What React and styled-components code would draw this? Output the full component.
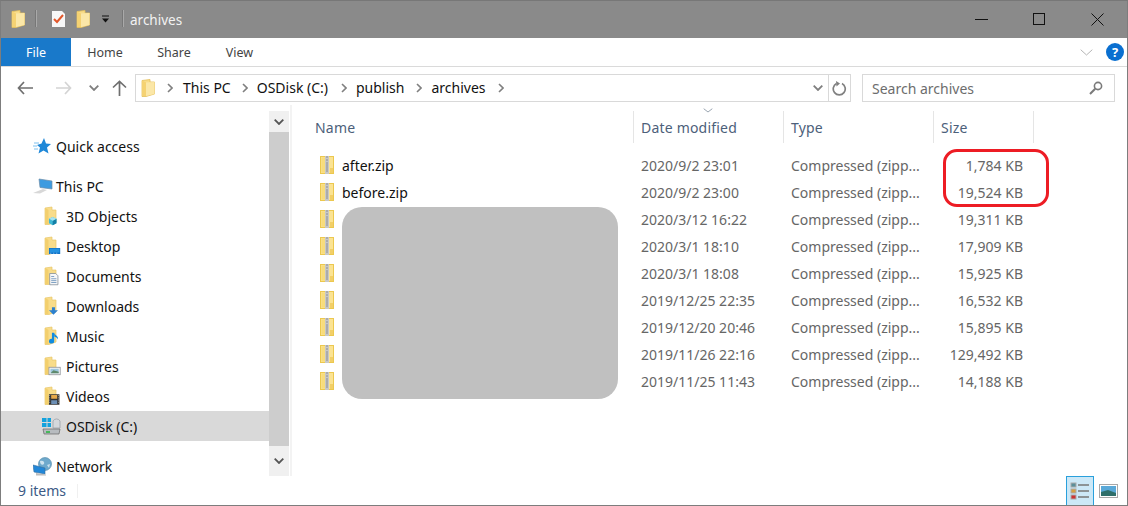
import React from "react";
import styled, { createGlobalStyle } from "styled-components";

const Global = createGlobalStyle`
  html, body { margin: 0; padding: 0; background: #fff; }
  body { font-family: "Noto Sans", "Open Sans", sans-serif; font-size: 14px; color: #111; }
  * { box-sizing: border-box; }
`;

const Window = styled.div`
  position: relative; width: 1128px; height: 506px; display: flex; flex-direction: column;
  border: 1px solid #7d7d7d; border-top-color: #777; overflow: hidden; background: #fff;
`;
const TitleBar = styled.div`
  height: 37px; flex: none; background: #8a8a8a; display: flex; align-items: center; padding: 0 0 2px 10px;
`;
const QuickSlot = styled.span`
  display: flex; align-items: center; justify-content: center; margin-right: ${p => p.$mr || 0}px;
`;
const TitleSep = styled.span`
  width: 2px; height: 17px; background: #a9a9a9; border-left: 1px solid #777; margin-right: ${p => p.$mr}px;
`;
const TitleText = styled.span`
  font-size: 13.5px; color: #f2f2f2; line-height: 20px; margin-top: 2px;
`;
const WinControls = styled.div`
  margin-left: auto; display: flex; align-items: center; margin-right: 23px; gap: 45px; margin-top: 2px;
`;
const Ribbon = styled.div`
  height: 29px; flex: none; display: flex; align-items: stretch; border-bottom: 1px solid #dadada;
`;
const FileTab = styled.div`
  width: 70px; background: #1979ca; color: #fff; font-size: 12.5px; display: flex; align-items: center; justify-content: center;
`;
const Tab = styled.div`
  width: ${p => p.$w}px; font-size: 12.5px; color: #444; display: flex; align-items: center; justify-content: center;
`;
const RibbonEnd = styled.div`
  margin-left: auto; display: flex; align-items: center; gap: 13px; margin-right: 3px;
`;
const NavRow = styled.div`
  height: 38px; flex: none; padding-top: 7px; display: flex; align-items: flex-start;
`;
const NavButtons = styled.div`
  width: 134px; height: 28px; flex: none; display: flex; align-items: center; padding-left: 16px;
`;
const NavSlot = styled.span`
  display: flex; margin-right: ${p => p.$mr}px;
`;
const AddressBox = styled.div`
  width: 716px; height: 28px; flex: none; border: 1px solid #d9d9d9; display: flex; align-items: center; padding-left: 5px;
`;
const Crumb = styled.span`
  font-size: 14px; color: #111; margin-left: ${p => p.$ml}px; line-height: 20px;
`;
const CrumbArrow = styled.span`
  display: flex; margin-left: ${p => p.$ml}px;
`;
const AddressEnd = styled.div`
  margin-left: auto; display: flex; align-items: center; height: 100%;
`;
const RefreshCell = styled.div`
  width: 22px; height: 100%; border-left: 1px solid #d9d9d9; display: flex; align-items: center; justify-content: center; margin-left: 5px;
`;
const SearchBox = styled.div`
  width: 253px; height: 28px; flex: none; margin-left: 11px; border: 1px solid #d9d9d9; display: flex; align-items: center; justify-content: space-between; padding: 0 11px 0 9px;
  font-size: 14px; color: #6d6d6d;
`;
const Main = styled.div`
  flex: 1; min-height: 0; display: flex;
`;
const Sidebar = styled.nav`
  width: 268px; flex: none; padding-top: 26px; overflow: hidden;
`;
const NavItem = styled.div`
  height: 30px; display: flex; align-items: center; padding-left: ${p => p.$indent}px; gap: ${p => p.$gap}px;
  margin-top: ${p => p.$mt || 0}px; background: ${p => p.$sel ? "#d9d9d9" : "transparent"}; font-size: 14px; color: #111;
`;
const Scrollbar = styled.div`
  width: 20px; flex: none; margin-top: 6px; display: flex; flex-direction: column;
`;
const ScrollBtn = styled.div`
  height: ${p => p.$h}px; background: #f0f0f0; display: flex; align-items: center; justify-content: center;
`;
const ScrollTrack = styled.div`
  flex: 1; background: #cdcdcd;
`;
const FileArea = styled.section`
  position: relative; flex: 1; margin-left: 1px; border-left: 2px solid #f3f3f3;
`;
const Columns = styled.div`
  display: grid; grid-template-columns: 342px 150px 150px 100px;
`;
const HeaderRow = styled(Columns)`
  height: 32px; margin-top: 6px; margin-bottom: 9px; position: relative;
`;
const HeadCell = styled.div`
  font-size: 14px; letter-spacing: .2px; color: #4c607a; display: flex; align-items: center; padding-left: ${p => p.$pl}px;
  border-right: 1px solid #e5e5e5; white-space: nowrap;
`;
const SortMark = styled.span`
  position: absolute; left: 411px; top: -3px; display: flex;
`;
const FileRow = styled(Columns)`
  height: 27px; align-items: center; font-size: 14px; color: #666;
`;
const NameCell = styled.div`
  display: flex; align-items: center; gap: 8px; padding-left: 28px; color: #111; height: 27px;
`;
const ZipSlot = styled.span`
  display: flex; margin-top: -2px;
`;
const DataCell = styled.div`
  padding-left: 7px; white-space: nowrap;
`;
const SizeCell = styled.div`
  text-align: right; padding-right: 11px; white-space: nowrap;
`;
const Redaction = styled.div`
  position: absolute; left: 50px; top: 102px; width: 276px; height: 192px; background: #c0c0c0; border-radius: 20px;
`;
const Annotation = styled.div`
  position: absolute; left: 651px; top: 44px; width: 106px; height: 58px; border: 3px solid #ed1c24; border-radius: 14px;
`;
const StatusBar = styled.footer`
  height: 29px; flex: none; display: flex; align-items: center; padding-left: 17px; font-size: 14px; color: #3c5a85; position: relative;
`;
const StatusSep = styled.span`
  width: 1px; height: 14px; background: #f0f0f0; margin-left: 11px;
`;
const ViewButtons = styled.div`
  margin-left: auto; display: flex; align-items: center; height: 100%; margin-right: 9px;
`;
const ViewActive = styled.div`
  width: 28px; height: 100%; background: #cce8f7; border: 1px solid #29a0dc; border-bottom: 0; display: flex; align-items: center; justify-content: center;
`;
const ViewPlain = styled.div`
  margin-left: 5px; display: flex;
`;

const Svg = ({ w, h, children }) => <svg width={w} height={h} viewBox={`0 0 ${w} ${h}`} style={{ display: "block", flex: "none" }}>{children}</svg>;

const TinyFolder = () => (
  <Svg w={14} h={18}>
    <path d="M1 1.5 L9 .5 V3 H13.5 V15 L5 17.5 H1 Z" fill="#f8dc8a" stroke="#e5bf5b" strokeWidth=".8" />
    <path d="M5 3.5 V17 L13.5 15 V3 Z" fill="#fbe7a8" />
    <path d="M1.2 1.5 L5 3.5 V17 L1.2 17 Z" fill="#f5d272" />
  </Svg>
);

const SideFolder = ({ children }) => (
  <Svg w={22} h={20}>
    <path d="M1 2 L8 1 V4 H12 V16 L5 18.5 H1 Z" fill="#f8dc8a" stroke="#e8c668" strokeWidth=".7" />
    <path d="M1.3 2 L4.5 4 V18 H1.3 Z" fill="#f3cf6d" />
    <g transform="translate(1.2 4.5) scale(.75)">{children}</g>
  </Svg>
);

const Zip = () => (
  <Svg w={14} h={18}>
    <rect x=".5" y=".5" width="13" height="17" fill="#fbe393" stroke="#ecc84f" />
    <rect x="1.5" y="1.5" width="3.5" height="15" fill="#f8dc7c" />
    <rect x="5" y="0" width="4" height="18" fill="#c8c8c8" />
    <path d="M6 1h2M6 4h2M6 7h2M6 9h2M6 11h2M6 13h2M6 15h2" stroke="#808080" strokeWidth=".8" />
    <rect x="10" y="12" width="3" height="5" fill="#f2cf68" />
  </Svg>
);

const Chev = ({ color = "#7f7f7f", w = 10, h = 6, sw = 1.8 }) => (
  <Svg w={w} h={h}><path d={`M.7 .7 L${w / 2} ${h - 1} L${w - .7} .7`} fill="none" stroke={color} strokeWidth={sw} /></Svg>
);
const CrumbChev = () => (
  <Svg w={6} h={10}><path d="M1 1 L5 5 L1 9" fill="none" stroke="#808080" strokeWidth="1.6" /></Svg>
);

const Icons = {
  star: (
    <Svg w={18} h={18}>
      <path d="M11 1 L13 6.5 L18 7 L14 10.5 L15.5 16.5 L10.5 13.5 L5.5 16.5 L7 10.5 L4 8 L8.5 6.5 Z" fill="#1f88d8" />
      <path d="M1 6h5M0 9h4M1 12h4" stroke="#7cc0ee" strokeWidth="1" />
    </Svg>
  ),
  pc: (
    <Svg w={20} h={16}>
      <path d="M6 1 L19 3 V11 L7 9.5 Z" fill="#3d9be0" stroke="#6d8ca8" strokeWidth=".7" />
      <path d="M0 15 L10 11 L14 12 L7 15.5 Z" fill="#d8d8d8" />
    </Svg>
  ),
  cube: <><path d="M5 11 L10 8.5 L15 11 V17 L10 19.5 L5 17 Z" fill="#3fb9d6" /><path d="M10 13.5 L15 11 V17 L10 19.5 Z" fill="#157fa6" /><path d="M5 11 L10 8.5 L15 11 L10 13.5 Z" fill="#a5e3f0" /></>,
  desktop: <><rect x="5" y="10" width="15" height="8" fill="#0f73c8" /><rect x="6" y="11" width="13" height="5" fill="#2592e0" /><path d="M7 17h1M11 17h1M15 17h1" stroke="#fff" /></>,
  doc: <><path d="M6 4 H14 L17 7 V19 H6 Z" fill="#f7f7f7" stroke="#7e8a96" /><path d="M8 8h4M8 11h7M8 13.5h7M8 16h7" stroke="#5a87b4" /></>,
  down: <><path d="M9 9 H13 V13 H17 L11 19 L5 13 H9 Z" fill="#2c80cf" /></>,
  music: <><path d="M12 3 V14 A3.5 3.2 0 1 1 9 11 V3 Z" fill="#118ce0" /><path d="M12 3 C13 7 18 7 17 12 C16 9 14 9 12 8 Z" fill="#118ce0" /></>,
  pic: <><rect x="5" y="9" width="15" height="10" fill="#f4f4f4" stroke="#8a8f96" /><rect x="7" y="11" width="11" height="6" fill="#9cc6de" /><path d="M7 17 L11 13 L18 15 V17 Z" fill="#5f8a6d" /></>,
  film: <><rect x="5" y="5" width="14" height="14" fill="#333" /><rect x="8" y="6" width="8" height="5" fill="#e5a84a" /><rect x="8" y="13" width="8" height="5" fill="#6c8fb5" /><path d="M6 6v12M18 6v12" stroke="#bbb" strokeDasharray="1.5 1.5" /></>,
  disk: (
    <Svg w={20} h={20}>
      <path d="M1 2 H5.5 V6 H1 Z M6.5 2 H10 V6 H6.5 Z M1 7 H5.5 V11 H1 Z M6.5 7 H10 V11 H6.5 Z" fill="#13a2dd" />
      <path d="M12 5 A4 4 0 0 1 19 5 V12 H12 Z" fill="#d4d8dc" stroke="#9aa1a8" strokeWidth=".8" />
      <path d="M2 13 H19 L18 18 H3 Z" fill="#b7bbbf" stroke="#666" strokeWidth=".7" />
      <rect x="5" y="15" width="4" height="2" fill="#46b85a" />
    </Svg>
  ),
  net: (
    <Svg w={20} h={19}>
      <circle cx="12" cy="7" r="6.5" fill="#6ea9cc" stroke="#4e86a8" strokeWidth=".6" />
      <path d="M7 4 C10 3 12 5 11 7 C9 9 7 7 7 4 Z M14 8 L17 7 L16 11 Z" fill="#cde3ef" />
      <path d="M0 8 L12 11 V17 L1 15 Z" fill="#2287d8" stroke="#386f9e" strokeWidth=".6" />
      <path d="M3 16 L13 17.5 V18.5 H3 Z" fill="#bcbcbc" />
    </Svg>
  ),
};

const navItems = [
  { label: "3D Objects", ov: Icons.cube },
  { label: "Desktop", ov: Icons.desktop },
  { label: "Documents", ov: Icons.doc },
  { label: "Downloads", ov: Icons.down },
  { label: "Music", ov: Icons.music },
  { label: "Pictures", ov: Icons.pic },
  { label: "Videos", ov: Icons.film },
];

const files = [
  ["after.zip", "2020/9/2 23:01", "1,784 KB"],
  ["before.zip", "2020/9/2 23:00", "19,524 KB"],
  ["", "2020/3/12 16:22", "19,311 KB"],
  ["", "2020/3/1 18:10", "17,909 KB"],
  ["", "2020/3/1 18:08", "15,925 KB"],
  ["", "2019/12/25 22:35", "16,532 KB"],
  ["", "2019/12/20 20:46", "15,895 KB"],
  ["", "2019/11/26 22:16", "129,492 KB"],
  ["", "2019/11/25 11:43", "14,188 KB"],
];

export default function App() {
  return (
    <>
      <Global />
      <Window>
        <TitleBar>
          <QuickSlot $mr={10}><TinyFolder /></QuickSlot>
          <TitleSep $mr={14} />
          <QuickSlot $mr={10}>
            <Svg w={15} h={18}>
              <path d="M1 1 H11 L14 4 V17 H1 Z" fill="#f7f7f7" />
              <path d="M3 9 L6 12 L12 5" fill="none" stroke="#e2572b" strokeWidth="2" />
            </Svg>
          </QuickSlot>
          <QuickSlot $mr={11}><TinyFolder /></QuickSlot>
          <QuickSlot $mr={12}>
            <Svg w={9} h={8}>
              <path d="M1 1 H8" stroke="#111" strokeWidth="1" /><path d="M1 3.5 H8 L4.5 7.5 Z" fill="#111" />
            </Svg>
          </QuickSlot>
          <TitleSep $mr={6} />
          <TitleText>archives</TitleText>
          <WinControls>
            <Svg w={13} h={12}><path d="M0 5.5 H13" stroke="#111" strokeWidth="1" /></Svg>
            <Svg w={13} h={13}><rect x=".5" y=".5" width="11" height="11" fill="none" stroke="#111" /></Svg>
            <Svg w={13} h={13}><path d="M.5 .5 L12.5 12.5 M12.5 .5 L.5 12.5" stroke="#111" strokeWidth="1" /></Svg>
          </WinControls>
        </TitleBar>
        <Ribbon>
          <FileTab>File</FileTab>
          <Tab $w={68}>Home</Tab>
          <Tab $w={70}>Share</Tab>
          <Tab $w={61}>View</Tab>
          <RibbonEnd>
            <Chev color="#b4b4b4" w={13} h={7} sw={1} />
            <Svg w={18} h={18}>
              <circle cx="9" cy="9" r="9" fill="#0a6fd0" />
              <text x="9" y="14" fontFamily="Noto Sans" fontSize="13" fontWeight="700" fill="#fff" textAnchor="middle">?</text>
            </Svg>
          </RibbonEnd>
        </Ribbon>
        <NavRow>
          <NavButtons>
            <NavSlot $mr={23}>
              <Svg w={16} h={14}><path d="M7 1 L1.5 7 L7 13 M1.5 7 H16" fill="none" stroke="#6f6f6f" strokeWidth="1.7" /></Svg>
            </NavSlot>
            <NavSlot $mr={17}>
              <Svg w={16} h={14}><path d="M9 1 L14.5 7 L9 13 M14.5 7 H0" fill="none" stroke="#d4d4d4" strokeWidth="1.7" /></Svg>
            </NavSlot>
            <NavSlot $mr={13}><Chev /></NavSlot>
            <NavSlot $mr={0}>
              <Svg w={15} h={16}><path d="M1 7.5 L7.5 1.5 L14 7.5 M7.5 1.5 V16" fill="none" stroke="#6f6f6f" strokeWidth="1.7" /></Svg>
            </NavSlot>
          </NavButtons>
          <AddressBox>
            <TinyFolder />
            <CrumbArrow $ml={12}><CrumbChev /></CrumbArrow>
            <Crumb $ml={10}>This PC</Crumb>
            <CrumbArrow $ml={11}><CrumbChev /></CrumbArrow>
            <Crumb $ml={9}>OSDisk (C:)</Crumb>
            <CrumbArrow $ml={13}><CrumbChev /></CrumbArrow>
            <Crumb $ml={9}>publish</Crumb>
            <CrumbArrow $ml={12}><CrumbChev /></CrumbArrow>
            <Crumb $ml={9}>archives</Crumb>
            <CrumbArrow $ml={12}><CrumbChev /></CrumbArrow>
            <AddressEnd>
              <Chev />
              <RefreshCell>
                <Svg w={15} h={15}>
                  <path d="M10 2.5 A6 6 0 1 1 4.5 2.5" fill="none" stroke="#808080" strokeWidth="1.7" />
                  <path d="M4 0 L8 2.5 L4.5 5.5 Z" fill="#808080" />
                </Svg>
              </RefreshCell>
            </AddressEnd>
          </AddressBox>
          <SearchBox>
            Search archives
            <Svg w={14} h={14}>
              <circle cx="9" cy="5" r="3.6" fill="none" stroke="#7a7a7a" strokeWidth="1.6" />
              <path d="M6.2 7.8 L1 13" stroke="#7a7a7a" strokeWidth="2" />
            </Svg>
          </SearchBox>
        </NavRow>
        <Main>
          <Sidebar>
            <NavItem $indent={32} $gap={5}>{Icons.star}Quick access</NavItem>
            <NavItem $indent={32} $gap={3} $mt={10}>{Icons.pc}This PC</NavItem>
            {navItems.map(n => (
              <NavItem key={n.label} $indent={43} $gap={0}>
                <SideFolder>{n.ov}</SideFolder>{n.label}
              </NavItem>
            ))}
            <NavItem $indent={40} $gap={5} $sel>{Icons.disk}OSDisk (C:)</NavItem>
            <NavItem $indent={32} $gap={3} $mt={10}>{Icons.net}Network</NavItem>
          </Sidebar>
          <Scrollbar>
            <ScrollBtn $h={21}><Chev color="#555" /></ScrollBtn>
            <ScrollTrack />
            <ScrollBtn $h={30}><Chev color="#555" /></ScrollBtn>
          </Scrollbar>
          <FileArea>
            <HeaderRow>
              <HeadCell $pl={23}>Name</HeadCell>
              <HeadCell $pl={7}>Date modified</HeadCell>
              <HeadCell $pl={7}>Type</HeadCell>
              <HeadCell $pl={7}>Size</HeadCell>
              <SortMark><Chev color="#9aa5b1" w={10} h={5} sw={1} /></SortMark>
            </HeaderRow>
            {files.map((f, i) => (
              <FileRow key={i}>
                <NameCell><ZipSlot><Zip /></ZipSlot>{f[0]}</NameCell>
                <DataCell>{f[1]}</DataCell>
                <DataCell>Compressed (zipp...</DataCell>
                <SizeCell>{f[2]}</SizeCell>
              </FileRow>
            ))}
            <Redaction />
            <Annotation />
          </FileArea>
        </Main>
        <StatusBar>
          9 items<StatusSep />
          <ViewButtons>
            <ViewActive>
              <Svg w={20} h={18}>
                <rect x="1" y="1" width="5" height="4" fill="#5b8f9a" stroke="#aaa" />
                <rect x="1" y="7" width="5" height="4" fill="#d6a042" stroke="#aaa" />
                <rect x="1" y="13" width="5" height="4" fill="#c33" stroke="#aaa" />
                <path d="M8 3h11M8 9h11M8 15h11" stroke="#777" strokeWidth="1.4" />
              </Svg>
            </ViewActive>
            <ViewPlain>
              <Svg w={19} h={14}>
                <rect x=".5" y=".5" width="18" height="13" fill="#fff" stroke="#a8a8a8" />
                <rect x="2" y="2" width="15" height="10" fill="#5aa9d8" />
                <path d="M2 8 L9 6 L17 9 V12 H2 Z" fill="#2f6f6a" />
              </Svg>
            </ViewPlain>
          </ViewButtons>
        </StatusBar>
      </Window>
    </>
  );
}
